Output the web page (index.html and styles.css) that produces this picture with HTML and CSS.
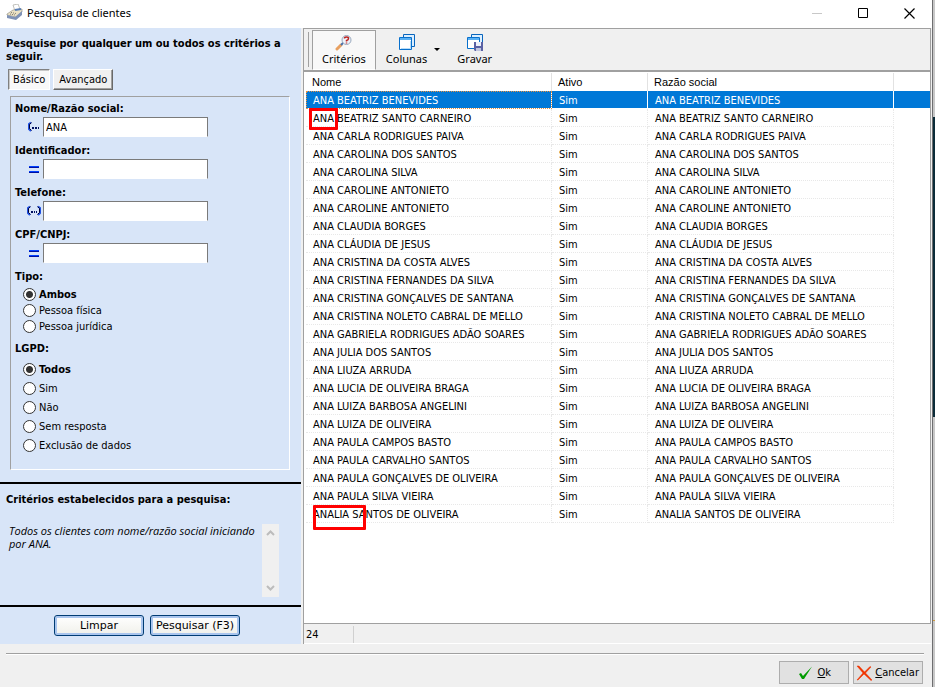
FILE: index.html
```html
<!DOCTYPE html>
<html lang="pt-BR">
<head>
    <meta charset="UTF-8">
    <meta name="viewport" content="width=device-width, initial-scale=1.0">
    <title>Pesquisa de clientes</title>
    <link rel="stylesheet" href="styles.css">
</head>
<body>

<div class="window">
    <!-- Title bar -->
    <header class="titlebar">
        <svg class="app-icon" width="18" height="18" viewBox="0 0 18 18">
            <path d="M7 1l5-1 2 5-5 2z" fill="#fff" stroke="#a8a8a0" stroke-width=".7"/>
            <path d="M1 10l6-4 9-1v3l-6 5-9-2z" fill="#ece2c4" stroke="#9a968a" stroke-width=".7"/>
            <path d="M1 11l8 2 7-6v4l-6 5-9-2z" fill="#7f92b6"/>
            <path d="M4 10l5 1M5 8.500l5 1" stroke="#7d7a70" stroke-dasharray="1 1"/>
            <path d="M9 6l6-1" stroke="#597fb7" stroke-width="2"/>
        </svg>
        <h1>Pesquisa de clientes</h1>
        <div class="window-buttons">
            <button type="button" aria-label="Minimizar"><svg width="11" height="11"><path d="M0 5.500h10" stroke="#c8c8c8"/></svg></button>
            <button type="button" aria-label="Maximizar"><svg width="11" height="11"><path d="M.5.5h9v9h-9z" fill="none" stroke="#000"/></svg></button>
            <button type="button" aria-label="Fechar"><svg width="11" height="11"><path d="M.5.5l10 10M10.500.5l-10 10" stroke="#000" stroke-width="1.200"/></svg></button>
        </div>
    </header>

    <main class="content">
        <!-- Search criteria -->
        <form class="sidebar">
            <section class="criteria">
                <h2>Pesquise por qualquer um ou todos os critérios a seguir.</h2>
                <div class="tabs">
                    <button type="button" class="tab active">Básico</button>
                    <button type="button" class="tab">Avançado</button>
                </div>
                <div class="fields">
                    <label for="nome">Nome/Razão social:</label>
                    <div class="field">
                        <svg width="16" height="12" viewBox="0 0 16 12"><path d="M5 1.500L3 3v5l2 2" fill="none" stroke="#2050e0" stroke-width="2"/><path d="M5.500 1.500L3.500 3.500v4l2 2" fill="none" stroke="#000038"/><path d="M6 6h2v2H6zM9 6h2v2H9zM12 6h1v2h-1z" fill="#001060"/></svg>
                        <input type="text" id="nome" value="ANA">
                    </div>
                    <label for="identificador">Identificador:</label>
                    <div class="field">
                        <svg width="16" height="12" viewBox="0 0 16 12"><path d="M3 3.500h10M3 8.500h10" stroke="#0040ff"/><path d="M3 4.500h10M3 9.500h10" stroke="#0010a0"/></svg>
                        <input type="text" id="identificador">
                    </div>
                    <label for="telefone">Telefone:</label>
                    <div class="field">
                        <svg width="16" height="12" viewBox="0 0 16 12"><path d="M4 1.500L2 3v5l2 2M12 1.500L14 3v5l-2 2" fill="none" stroke="#2050e0" stroke-width="2"/><path d="M4.500 1.500L2.500 3.500v4l2 2M11.500 1.500l2 2v4l-2 2" fill="none" stroke="#000038"/><path d="M5 6h2v2H5zM8 6h1v2H8zM10 6h1v2h-1z" fill="#001060"/></svg>
                        <input type="text" id="telefone">
                    </div>
                    <label for="cpf">CPF/CNPJ:</label>
                    <div class="field">
                        <svg width="16" height="12" viewBox="0 0 16 12"><path d="M3 3.500h10M3 8.500h10" stroke="#0040ff"/><path d="M3 4.500h10M3 9.500h10" stroke="#0010a0"/></svg>
                        <input type="text" id="cpf">
                    </div>
                    <fieldset class="options compact">
                        <legend>Tipo:</legend>
                        <label><input type="radio" name="tipo" checked><span>Ambos</span></label>
                        <label><input type="radio" name="tipo"><span>Pessoa física</span></label>
                        <label><input type="radio" name="tipo"><span>Pessoa jurídica</span></label>
                    </fieldset>
                    <fieldset class="options">
                        <legend>LGPD:</legend>
                        <label><input type="radio" name="lgpd" checked><span>Todos</span></label>
                        <label><input type="radio" name="lgpd"><span>Sim</span></label>
                        <label><input type="radio" name="lgpd"><span>Não</span></label>
                        <label><input type="radio" name="lgpd"><span>Sem resposta</span></label>
                        <label><input type="radio" name="lgpd"><span>Exclusão de dados</span></label>
                    </fieldset>
                </div>
            </section>
            <section class="summary">
                <h2>Critérios estabelecidos para a pesquisa:</h2>
                <div class="summary-box">
                    <p>Todos os clientes com nome/razão social iniciando por ANA.</p>
                    <div class="scrollbar">
                        <svg width="9" height="6"><path d="M1 5l3.500-3.500L8 5" fill="none" stroke="#bcbcbc" stroke-width="2"/></svg>
                        <svg width="9" height="6"><path d="M1 1l3.500 3.500L8 1" fill="none" stroke="#bcbcbc" stroke-width="2"/></svg>
                    </div>
                </div>
            </section>
            <div class="search-buttons">
                <button type="reset">Limpar</button>
                <button type="button">Pesquisar (F3)</button>
            </div>
        </form>

        <!-- Results -->
        <section class="results">
            <div class="toolbar">
                <button type="button" class="tool active">
                    <svg width="18" height="17" viewBox="0 0 18 17"><path d="M2 15l4-4" stroke="#e8a060" stroke-width="3" stroke-linecap="round"/><path d="M6 11l3-3" stroke="#4972ad" stroke-width="2"/><circle cx="11.500" cy="6" r="4.500" fill="#edf3fb" stroke="#98a8bd"/><path d="M9.500 4.500q0-1.500 2-1.500t2 1.500-2 2v1M11.500 8.500v1" fill="none" stroke="#bd2420" stroke-width="1.500"/></svg>
                    Critérios
                </button>
                <button type="button" class="tool dropdown">
                    <svg width="18" height="17" viewBox="0 0 18 17"><path d="M5.500.5h11v12h-11z" fill="#dcefff" stroke="#0865bd" stroke-linejoin="round"/><path d="M1.500 3.500h12v12h-12z" fill="#fff" stroke="#0870cc" stroke-linejoin="round"/><path d="M2 5h11" stroke="#58b0f4" stroke-width="2"/><path d="M3 14.500h9.500V7" fill="none" stroke="#b8dcf8"/></svg>
                    Colunas
                </button>
                <button type="button" class="tool">
                    <svg width="18" height="17" viewBox="0 0 18 17"><path d="M5.500.5h11v12h-11z" fill="#dcefff" stroke="#0865bd" stroke-linejoin="round"/><path d="M1.500 3.500h12v11h-12z" fill="#fff" stroke="#0870cc" stroke-linejoin="round"/><path d="M2 5h11" stroke="#58b0f4" stroke-width="2"/><path d="M8 8h9v9H9l-1-1z" fill="#5a61a4"/><path d="M10 8h5v4h-5z" fill="#edf0fa"/><path d="M10 14h5v3h-5z" fill="#c2c6df"/></svg>
                    Gravar
                </button>
            </div>
            <div class="grid">
                <table>
                    <thead>
                        <tr><th class="name">Nome</th><th class="active-col">Ativo</th><th class="company">Razão social</th><th></th></tr>
                    </thead>
                    <tbody id="rows"></tbody>
                </table>
            </div>
            <div class="status"><span>24</span></div>
        </section>
    </main>

    <footer class="actions">
        <button type="button"><svg width="15" height="14" viewBox="0 0 15 14"><path d="M1 8l2-1 2 3 9-9.500-8 12.500H4z" fill="#009b00"/></svg><span><u>O</u>k</span></button>
        <button type="button"><svg width="17" height="16" viewBox="0 0 17 16"><path d="M1 1l2 0 5.500 6L14 1.500l1 .5-5.500 6 6.500 7-1 .5-7-6.500-6 6H1l6-7z" fill="#f03400" stroke="#f03400" stroke-width=".5"/></svg><span><u>C</u>ancelar</span></button>
    </footer>
</div>
<div class="desktop"></div>

<script>
    const clients = [
        'ANA BEATRIZ BENEVIDES',
        'ANA BEATRIZ SANTO CARNEIRO',
        'ANA CARLA RODRIGUES PAIVA',
        'ANA CAROLINA DOS SANTOS',
        'ANA CAROLINA SILVA',
        'ANA CAROLINE ANTONIETO',
        'ANA CAROLINE ANTONIETO',
        'ANA CLAUDIA BORGES',
        'ANA CLÁUDIA DE JESUS',
        'ANA CRISTINA DA COSTA ALVES',
        'ANA CRISTINA FERNANDES DA SILVA',
        'ANA CRISTINA GONÇALVES DE SANTANA',
        'ANA CRISTINA NOLETO CABRAL DE MELLO',
        'ANA GABRIELA RODRIGUES ADÃO SOARES',
        'ANA JULIA DOS SANTOS',
        'ANA LIUZA ARRUDA',
        'ANA LUCIA DE OLIVEIRA BRAGA',
        'ANA LUIZA BARBOSA ANGELINI',
        'ANA LUIZA DE OLIVEIRA',
        'ANA PAULA CAMPOS BASTO',
        'ANA PAULA CARVALHO SANTOS',
        'ANA PAULA GONÇALVES DE OLIVEIRA',
        'ANA PAULA SILVA VIEIRA',
        'ANALIA SANTOS DE OLIVEIRA'
    ];

    // Rows that carry a red highlight frame
    const marks = { 1: 'mark-short', 23: 'mark-long' };

    document.getElementById('rows').innerHTML = clients.map((name, i) => `
        <tr class="${i === 0 ? 'selected' : ''}">
            <td>${name}${marks[i] ? `<i class="mark ${marks[i]}"></i>` : ''}</td>
            <td>Sim</td>
            <td>${name}</td>
            <td></td>
        </tr>`).join('');
</script>

</body>
</html>
```
FILE: styles.css
```css
* {
    box-sizing: border-box;
}
body {
    margin: 0;
    display: flex;
    min-height: 100vh;
    font: 11px/13px "DejaVu Sans Condensed", "DejaVu Sans", sans-serif;
    color: #000;
    background: #f0f0f0;
}
button,
input {
    font: inherit;
    color: inherit;
}
svg {
    flex-shrink: 0;
}
h1,
h2,
p {
    margin: 0;
}
h2 {
    font-size: 11px;
}
.window {
    flex: 1;
    min-width: 0;
    display: flex;
    flex-direction: column;
    border-right: 1px solid #6e6e70;
}
.desktop {
    width: 2px;
    background: linear-gradient(#c8c8c8 117px, #0b2b38 117px, #0b2b38 417px, #c8c8c8 417px, #c8c8c8 620px, #d09a40 620px, #d09a40 621px, #c8c8c8 621px);
}

/* Title bar */
.titlebar {
    height: 28px;
    display: flex;
    align-items: center;
    background: #fff;
    padding: 0 0 2px 6px;
}
.titlebar h1 {
    flex: 1;
    margin-left: 3px;
    font: 11px/16px "Noto Sans", sans-serif;
}
.window-buttons {
    display: flex;
}
.window-buttons button {
    display: flex;
    align-items: center;
    justify-content: center;
    width: 46px;
    height: 24px;
    padding: 0;
    border: 0;
    background: none;
}

/* Sidebar */
.content {
    flex: 1;
    display: flex;
    padding-right: 1px;
}
.sidebar {
    width: 301px;
    display: flex;
    flex-direction: column;
    background: #d8e5f8;
}
.criteria {
    height: 456px;
    padding: 9px 11px 0 6px;
    border-bottom: 2px solid #000;
}
.tabs {
    display: flex;
    gap: 3px;
    margin: 6px 0 6px 2px;
}
.tab {
    height: 21px;
    padding: 0 5px;
    background: #f0f0f0;
    border: 1px solid;
    border-color: #fff #696969 #696969 #fff;
    box-shadow: inset -1px -1px #a0a0a0;
}
.tab.active {
    padding: 0 4px;
    background: #f8f8f8;
    border-color: #808080 #fff #fff #808080;
    box-shadow: inset 1px 1px #c8c8c8;
}
.fields {
    height: 374px;
    margin-left: 4px;
    padding: 5px 4px;
    border: 1px solid;
    border-color: #a0a0a0 #fff #fff #a0a0a0;
}
.fields > label,
legend {
    display: block;
    padding: 0;
    font-weight: bold;
}
.field {
    display: flex;
    align-items: center;
    gap: 1px;
    margin: 2px 0 7px 11px;
}
.field input {
    width: 165px;
    height: 20px;
    padding: 0 2px;
    background: #fff;
    border: 1px solid;
    border-color: #7a7a7a #7a7a7a #fff #7a7a7a;
}
.options {
    margin: 0 0 8px;
    padding: 0;
    border: 0;
}
.options label {
    display: flex;
    align-items: center;
    gap: 3px;
    height: 19px;
    margin-left: 8px;
}
.options legend {
    margin-bottom: 5px;
}
.compact label {
    height: 16px;
}
.options.compact legend {
    margin-bottom: 3px;
}
.options input {
    appearance: none;
    width: 13px;
    height: 13px;
    margin: 0;
    background: #fff;
    border: 1px solid #333;
    border-radius: 50%;
}
.options input:checked {
    background: radial-gradient(circle, #333 3px, #fff 4px);
}
.options input:checked + span {
    font-weight: bold;
}
.summary {
    height: 123px;
    padding: 9px 22px 0 6px;
    border-bottom: 2px solid #000;
}
.summary-box {
    display: flex;
    margin-top: 18px;
}
.summary-box p {
    flex: 1;
    padding: 0 0 0 3px;
    font-family: "Open Sans", sans-serif;
    font-style: italic;
}
.scrollbar {
    width: 17px;
    height: 73px;
    padding: 6px 0;
    display: flex;
    flex-direction: column;
    justify-content: space-between;
    align-items: center;
    background: #f0f0f0;
}
.search-buttons {
    display: flex;
    justify-content: center;
    gap: 6px;
    padding: 8px 7px 7px 0;
}
.search-buttons button {
    width: 90px;
    height: 21px;
    padding: 0;
    font: 11px/13px "DejaVu Sans", sans-serif;
    background: linear-gradient(#fff, #f0f0ea);
    border: 1px solid #003c74;
    border-radius: 3px;
    box-shadow: inset 0 0 0 2px #a9c5ee;
}

/* Results */
.results {
    flex: 1;
    min-width: 0;
    margin-left: 2px;
    display: flex;
    flex-direction: column;
    border: solid #a0a0a0;
    border-width: 1px 0 0 1px;
}
.toolbar {
    display: flex;
    height: 41px;
    padding: 1px 0 0 7px;
    border-right: 1px solid #a0a0a0;
}
.toolbar::before {
    content: "";
    width: 1px;
    margin: 2px 0 3px -3px;
    background: #a0a0a0;
}
.tool {
    position: relative;
    display: flex;
    flex-direction: column;
    align-items: center;
    padding: 4px 10px 0;
    font: 11px/15px "Noto Sans", sans-serif;
    background: none;
    border: 0;
}
.tool.active {
    margin-left: 3px;
    padding: 3px 9px 0;
    background: #f8f8f8;
    border: 1px solid;
    border-color: #a0a0a0 #a0a0a0 #fff #a0a0a0;
}
.dropdown {
    margin-right: 10px;
}
.dropdown::after {
    content: "";
    position: absolute;
    right: -3px;
    top: 18px;
    border: solid transparent;
    border-width: 3px 3px 0;
    border-top-color: #000;
}
.grid {
    flex: 1;
    padding: 1px 0 1px 2px;
    background: #fff;
    border: solid #a0a0a0;
    border-width: 2px 1px 1px 0;
}
table {
    width: 100%;
    table-layout: fixed;
    border-collapse: separate;
    border-spacing: 0;
}
th {
    height: 18px;
    padding: 0 6px;
    font: 11px/13px "Liberation Sans", sans-serif;
    text-align: left;
    border-right: 1px solid #e2e2e2;
}
th:last-child {
    border: 0;
}
.name {
    width: 246px;
}
.active-col {
    width: 96px;
}
.company {
    width: 246px;
}
td {
    position: relative;
    height: 18px;
    padding: 2px 7px 0;
    white-space: nowrap;
    border: dotted #e8e8e8;
    border-width: 0 1px 1px 0;
}
td:last-child {
    border: 0;
}
.selected td {
    color: #fff;
    background: #0078d7;
    border-right: 1px solid #fff;
    border-bottom: 1px solid #fff;
}
.selected td:last-child {
    border-right: 0;
}
.selected td:first-child {
    outline: 1px dotted #e89040;
    outline-offset: -1px;
}
.mark {
    position: absolute;
    border: 3px solid #f00;
    border-radius: 1px;
}
.mark-short {
    left: 3px;
    top: -1px;
    width: 29px;
    height: 22px;
}
.mark-long {
    left: 7px;
    top: 0;
    width: 53px;
    height: 25px;
}
.status {
    height: 20px;
    padding: 2px 0;
    border-bottom: 1px solid #fff;
}
.status span {
    display: block;
    width: 50px;
    padding: 2px;
    border-right: 1px solid #d0d0d0;
}

/* Footer */
.actions {
    display: flex;
    justify-content: flex-end;
    gap: 4px;
    margin: 9px 8px 0 6px;
    padding: 7px 1px 3px;
    border-top: 1px solid #a0a0a0;
    box-shadow: inset 0 1px #fff;
}
.actions button {
    width: 70px;
    height: 23px;
    padding: 0 3px;
    display: flex;
    align-items: center;
    justify-content: flex-end;
    gap: 2px;
    background: #e1e1e1;
    border: 1px solid #adadad;
}
.actions button:first-child {
    gap: 4px;
    padding-right: 17px;
}
```
